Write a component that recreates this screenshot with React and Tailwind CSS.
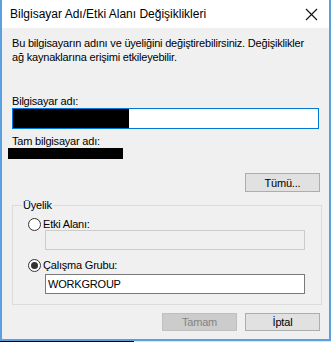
import React from 'react';

const font = { fontFamily: '"Liberation Sans", Arial, sans-serif' };

const Radio = ({ checked, label }) => (
  <div className="flex items-center h-[14px]">
    <span className="w-[13px] h-[13px] rounded-full border border-[#333333] bg-white flex items-center justify-center">
      {checked && <span className="w-[7px] h-[7px] rounded-full bg-[#333333]" />}
    </span>
    <span className="ml-[2px]">{label}</span>
  </div>
);

const App = () => {
  return (
    <div className="w-[331px] h-[342px] flex flex-col text-[11px] leading-[14px] tracking-[-0.2px] text-black" style={font}>
      <div className="h-[341px] shrink-0 bg-[#f0f0f0] border-x-2 border-b-2 border-[#5a9fe0] flex flex-col">
        {/* title bar */}
        <div className="h-[28px] bg-white flex items-center justify-between pl-[8px] pr-[11px] shrink-0">
          <span className="text-[12px] tracking-normal">Bilgisayar Adı/Etki Alanı Değişiklikleri</span>
          <svg width="13" height="13" viewBox="0 0 13 13">
            <path d="M1 1 L12 12 M12 1 L1 12" stroke="#111" strokeWidth="1.1" />
          </svg>
        </div>

        <div className="px-[10px] pt-[8px] flex flex-col">
          <p>
            Bu bilgisayarın adını ve üyeliğini değiştirebilirsiniz. Değişiklikler
            <br />
            ağ kaynaklarına erişimi etkileyebilir.
          </p>

          <p className="mt-[30px]">Bilgisayar adı:</p>
          <div className="mt-[0px] h-[21px] bg-white border border-[#0078d7] flex">
            <div className="w-[116px] h-full bg-black" />
          </div>

          <p className="mt-[5px]">Tam bilgisayar adı:</p>
          <div className="mt-[0px] ml-[-4px] w-[115px] h-[11px] bg-black" />

          <div className="flex justify-end mt-[14px]">
            <button className="w-[75px] h-[19px] bg-[#e1e1e1] border border-[#adadad] mr-[-1px]">Tümü...</button>
          </div>

          {/* group box */}
          <fieldset className="mt-[6px] border border-[#dcdcdc] px-[16px] pb-[10px] pt-0 mx-0">
            <legend className="px-[1px] ml-[-7px] leading-[14px]">Üyelik</legend>
            <div className="mt-[5px] ml-[-1px]">
              <Radio label="Etki Alanı:" />
            </div>
            <div className="mt-[-1px] ml-[16px] h-[20px] w-[260px] bg-[#f0f0f0] border border-[#cccccc]" />
            <div className="mt-[8px] ml-[-1px]">
              <Radio checked label="Çalışma Grubu:" />
            </div>
            <div className="mt-[2px] ml-[16px] h-[20px] w-[260px] bg-white border border-[#7a7a7a] flex items-center px-[2px]">
              WORKGROUP
            </div>
          </fieldset>

          <div className="flex justify-end gap-[8px] mt-[8px] mr-[-1px]">
            <button className="w-[75px] h-[18px] bg-[#cccccc] border border-[#bfbfbf] text-[#838383]">Tamam</button>
            <button className="w-[75px] h-[18px] bg-[#e1e1e1] border border-[#adadad]">İptal</button>
          </div>
        </div>
      </div>
      <div className="h-[1px] flex">
        <div className="w-[134px] bg-black" />
        <div className="flex-1 bg-[#dbe8f5]" />
      </div>
    </div>
  );
};

export default App;
